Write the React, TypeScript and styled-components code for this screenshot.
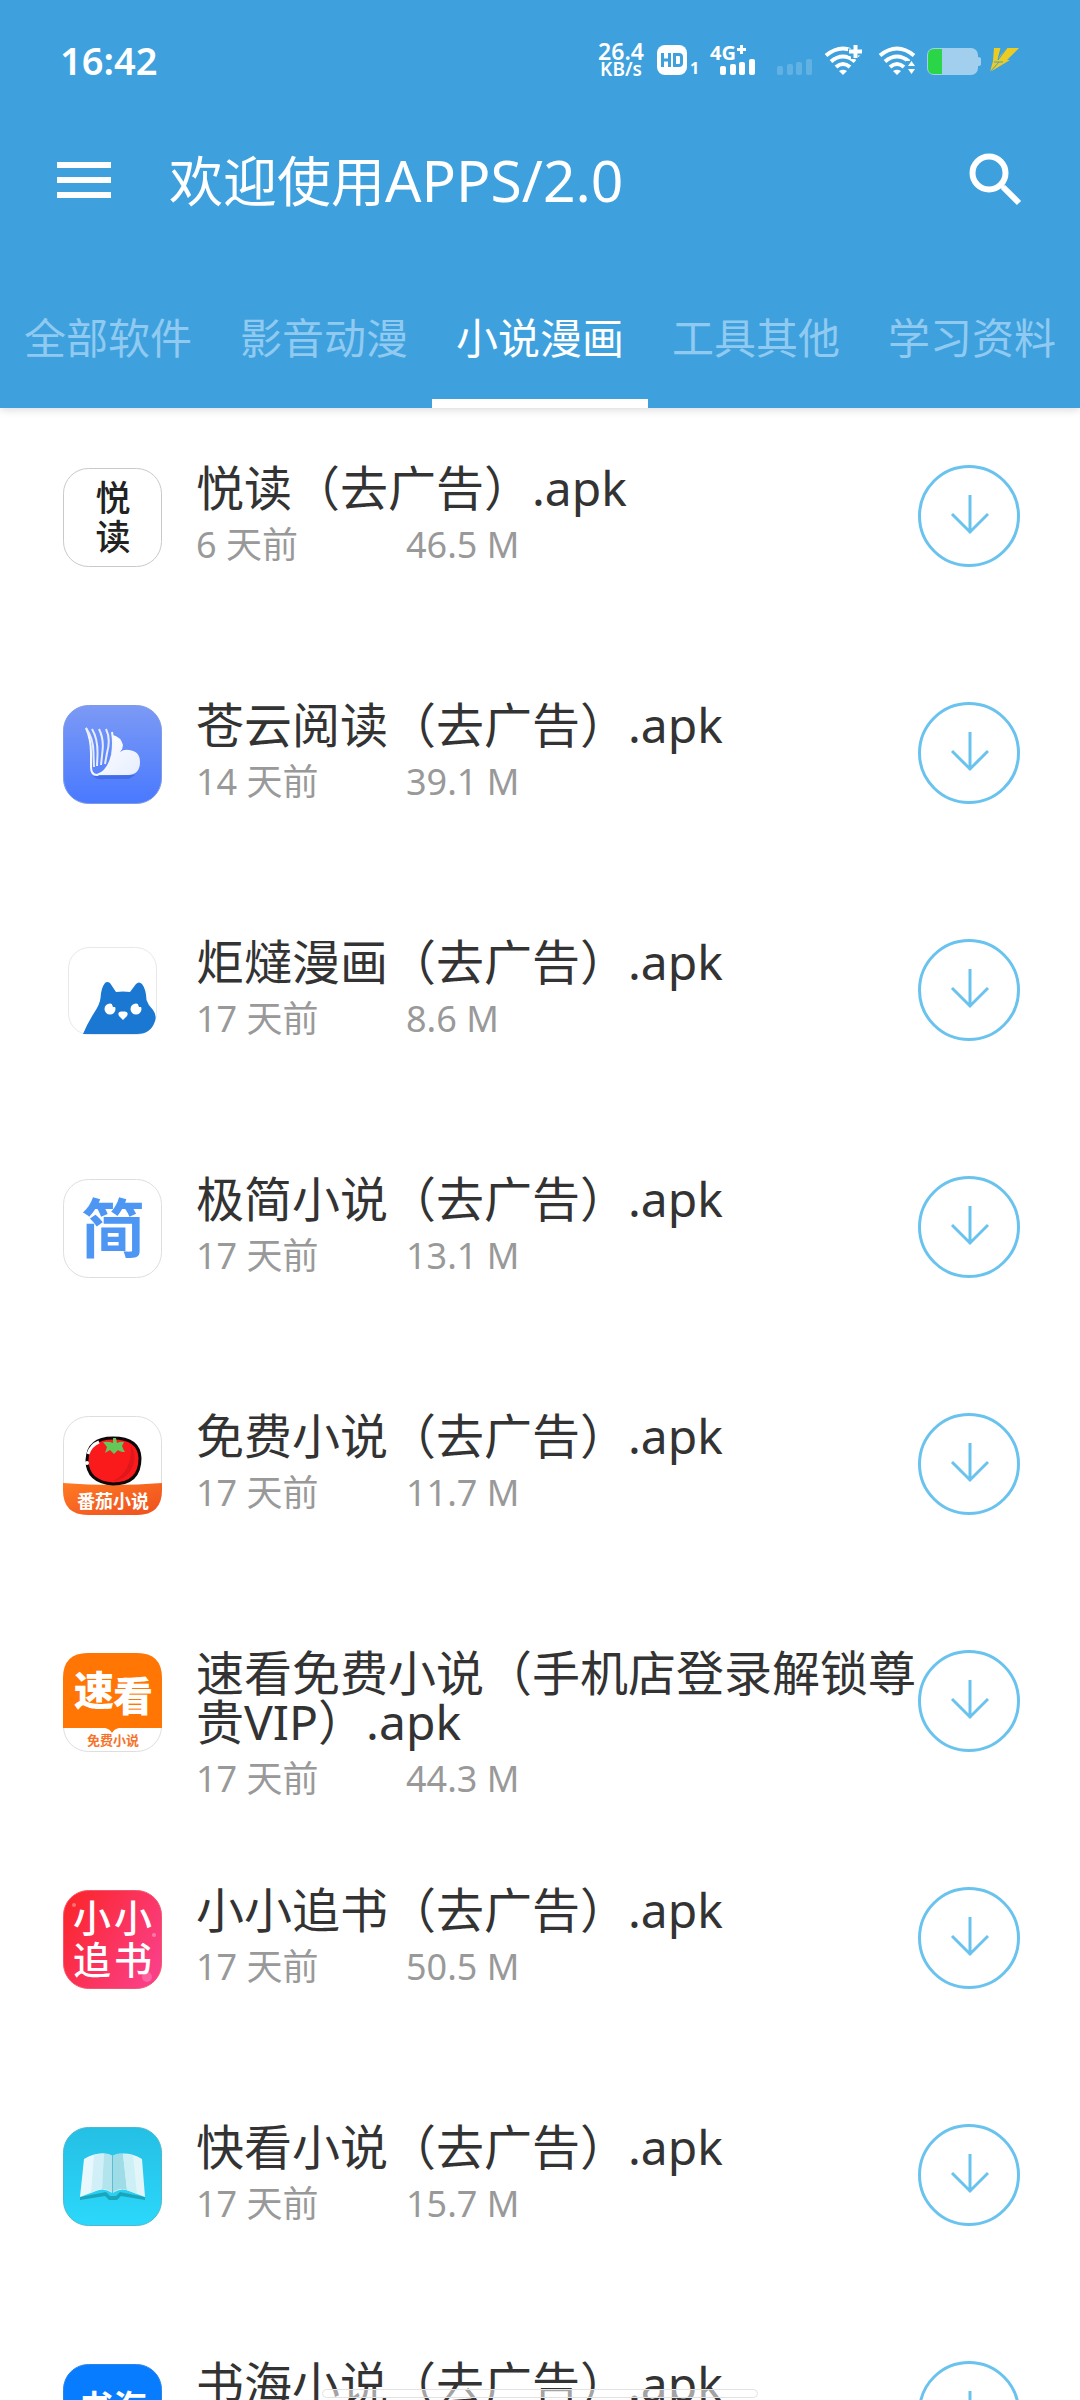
import React from 'react';
import styled, { createGlobalStyle } from 'styled-components';

const latin = '"Noto Sans", "Noto Sans CJK SC", sans-serif';
const cjk = '"Noto Sans CJK SC", sans-serif';

const GlobalStyle = createGlobalStyle`
  * { box-sizing: border-box; }
  body { margin: 0; background: #fff; font-family: ${latin}; }
  button { border: 0; padding: 0; background: none; font-family: inherit; color: inherit; cursor: pointer; }
`;

const Screen = styled.div`
  height: 100vh;
  display: flex;
  flex-direction: column;
  overflow: hidden;
`;

const Header = styled.header`
  position: relative;
  flex: none;
  background: #3ea1dd;
  color: #fff;
  box-shadow: 0 2px 8px rgba(0, 0, 0, 0.14);
`;

const StatusBar = styled.div`
  display: flex;
  align-items: center;
  height: 120px;
  padding: 0 58px 0 60px;
`;

const Clock = styled.time`
  flex: 1;
  font-size: 38px;
  font-weight: 600;
  line-height: 40px;
`;

const Speed = styled.div`
  display: flex;
  flex-direction: column;
  align-items: center;
  width: 48px;
  margin-right: 12px;
  font-weight: 600;
  line-height: 18px;
`;

const SpeedValue = styled.span`
  font-size: 23px;
`;

const SpeedUnit = styled.span`
  font-size: 19px;
`;

const StatusIcon = styled.svg`
  display: block;
  flex: none;
  height: 40px;
  overflow: visible;
`;

const Toolbar = styled.div`
  display: flex;
  align-items: center;
  height: 144px;
  padding: 0 56px 24px 57px;
`;

const IconButton = styled.button`
  display: flex;
  flex: none;
`;

const PageTitle = styled.h1`
  flex: 1;
  margin: 0 0 0 58px;
  font-size: 54px;
  font-weight: 400;
  line-height: 72px;
`;

const Version = styled.span`
  font-size: 57px;
`;

const Tabs = styled.div`
  display: flex;
`;

const Tab = styled.button<{ $active: boolean }>`
  flex: 1;
  height: 144px;
  padding-top: 3px;
  font-size: 42px;
  line-height: 60px;
  white-space: nowrap;
  color: ${(p) => (p.$active ? '#fff' : '#90caf1')};
  box-shadow: ${(p) => (p.$active ? 'inset 0 -9px #fff' : 'none')};
`;

const List = styled.ul`
  flex: 1;
  min-height: 0;
  overflow: hidden;
  margin: 0;
  padding: 0;
  list-style: none;
`;

const Row = styled.li`
  display: flex;
  align-items: flex-start;
  min-height: 237px;
  padding: 55px 60px 0 63px;
`;

const AppIcon = styled.svg`
  flex: none;
  width: 99px;
  height: 99px;
  margin-top: 5px;
  font-family: ${cjk};
  text-anchor: middle;
`;

const Info = styled.div`
  flex: 1;
  min-width: 0;
  padding-left: 34px;
`;

const FileName = styled.h2`
  margin: 0;
  font-size: 48px;
  font-weight: 400;
  line-height: 49px;
  color: #333;
`;

const Meta = styled.div`
  display: grid;
  grid-template-columns: 210px auto;
  margin-top: 9px;
  font-size: 36px;
  line-height: 48px;
  color: #999;
`;

const Download = styled.button`
  display: flex;
  flex: none;
  align-items: center;
  justify-content: center;
  width: 102px;
  height: 102px;
  margin-top: 2px;
  border: 3px solid #69c3ee;
  border-radius: 50%;
  color: #69c3ee;
`;

const HomeIndicator = styled.div`
  position: fixed;
  left: 50%;
  bottom: 2px;
  width: 436px;
  height: 9px;
  margin-left: -218px;
  border: 1px solid #e2e2e2;
  border-radius: 5px;
  background: rgba(255, 255, 255, 0.55);
`;

const Bars = ({ x }: { x: number }) => (
  <g fill="currentColor">
    <rect x={x} y="26" width="6" height="9" rx="2" />
    <rect x={x + 10} y="24" width="6" height="11" rx="2" />
    <rect x={x + 19} y="22" width="6" height="13" rx="2" />
    <rect x={x + 29} y="19" width="6" height="16" rx="2" />
  </g>
);

const WifiArcs = () => (
  <g fill="none" stroke="currentColor" strokeWidth="4">
    <path d="M3 15.500Q20 1.500 37 15.500" />
    <path d="M8 21.500Q20 11.500 32 21.500" />
    <path d="M13 27Q20 21 27 27" />
    <path d="M16 31Q20 28.500 24 31L20 35Z" fill="currentColor" stroke="none" />
  </g>
);

const StatusIcons = () => (
  <>
    <StatusIcon width="52" viewBox="0 0 52 40" aria-label="HD 1">
      <rect x="0" y="5" width="30" height="30" rx="8" fill="#fff" />
      <path
        d="M5.500 13V27M12.500 13V27M5.500 20H12.500M17.500 14.500H22Q24.500 14.500 24.500 17V23Q24.500 25.500 22 25.500H17.500Z"
        fill="none"
        stroke="#3ea1dd"
        strokeWidth="3"
      />
      <text x="33" y="34" fontSize="16" fontWeight="700" fill="#fff">1</text>
    </StatusIcon>
    <StatusIcon width="66" viewBox="0 0 66 40" aria-label="4G+">
      <text x="1" y="20" fontSize="20" fontWeight="700" fill="#fff">4G</text>
      <path d="M28 9.500H37M32.500 5V14" stroke="#fff" strokeWidth="3" />
      <Bars x={11} />
    </StatusIcon>
    <StatusIcon width="48" viewBox="0 0 48 40" opacity="0.18" aria-hidden="true">
      <Bars x={2} />
    </StatusIcon>
    <StatusIcon width="54" viewBox="0 0 54 40" aria-label="Wi-Fi">
      <WifiArcs />
      <path d="M25 12H38M31.500 5V19" stroke="#3ea1dd" strokeWidth="7" />
      <path d="M26 11.500H39M32.500 5V18" stroke="#fff" strokeWidth="4" />
    </StatusIcon>
    <StatusIcon width="48" viewBox="0 0 48 40" aria-label="Wi-Fi">
      <WifiArcs />
      <path d="M29 21H42V36H29Z" fill="#3ea1dd" />
      <path d="M31 26L34.500 21L38 26ZM31 29L34.500 34L38 29Z" fill="#fff" />
    </StatusIcon>
    <StatusIcon width="63" viewBox="0 0 63 40" aria-label="电量">
      <rect x="2" y="8" width="51" height="27" rx="7" fill="#a3cfee" />
      <path d="M53 17Q56 17 56 19V24Q56 26 53 26Z" fill="#a3cfee" />
      <path d="M17 9H9Q3 9 3 15V28Q3 34 9 34H17Z" fill="#2bd548" />
    </StatusIcon>
    <StatusIcon width="34" viewBox="0 0 34 40" aria-label="充电中">
      <path d="M6 8H13L10 18L19 8H31L19 20H22L2 32L5 21Z" fill="#eccb22" />
      <path d="M2 32L11 22H6M11 22H15M13 8L10 20L19 8" fill="none" stroke="#3ea1dd" strokeWidth="1" />
    </StatusIcon>
  </>
);

const Frame = ({ fill = '#fff', stroke = '#dedede' }: { fill?: string; stroke?: string }) => (
  <rect x="0.500" y="0.500" width="98" height="98" rx="25" fill={fill} stroke={stroke} />
);

const YueduIcon = () => (
  <AppIcon viewBox="0 0 99 99" aria-hidden="true">
    <Frame stroke="#c9c9c9" />
    <text x="50" y="43" fontSize="35" fontWeight="500" fill="#222">悦</text>
    <text x="50" y="82" fontSize="35" fontWeight="500" fill="#222">读</text>
  </AppIcon>
);

const CangyunIcon = () => (
  <AppIcon viewBox="0 0 99 99" aria-hidden="true">
    <defs>
      <linearGradient id="cy" x1="0" y1="0" x2="0" y2="1">
        <stop offset="0" stopColor="#7c9af5" />
        <stop offset="1" stopColor="#4979ff" />
      </linearGradient>
      <linearGradient id="cyCloud" x1="0" y1="0" x2="1" y2="1">
        <stop offset="0" stopColor="#fff" />
        <stop offset="1" stopColor="#e6edfe" />
      </linearGradient>
    </defs>
    <Frame fill="url(#cy)" stroke="#7f9be6" />
    <path d="M30 71Q34 75 42 74H66L72 70Z" fill="#345fd8" opacity="0.6" />
    <path
      d="M50 30Q58 32 60 40Q60 44 57 47Q61 44 66 45Q77 46 77 57Q77 69 66 70H34Q48 66 50 45Z"
      fill="url(#cyCloud)"
    />
    <path d="M23 23Q28 34 28 48V62Q28 70 34 70Q45 67 49 50Q51 38 49 27" fill="none" stroke="#f4f7ff" strokeWidth="2" />
    <path
      d="M23 23Q31 34 30.500 50L31 62M29 24Q35 34 34.500 50L34 61M36 24Q41 34 39.500 46L38 60M43 24Q48 34 44 48L42 59"
      fill="none"
      stroke="#e6edff"
      strokeWidth="2"
    />
  </AppIcon>
);

const JudaIcon = () => (
  <AppIcon viewBox="0 0 99 99" aria-hidden="true">
    <rect x="5.500" y="5.500" width="88" height="87" rx="21" fill="#fff" stroke="#e8e8e8" />
    <path
      d="M20 92Q24 82 31 71Q37 62 37.500 56Q38 46 42 41Q44 39 47 41L53 50Q60 49 67 50L73 42Q76 39 79 42Q83 47 83.500 58Q85 63 90 68Q94 73 92 79Q88 92 74 92Z"
      fill="#1a78d2"
    />
    <circle cx="47" cy="67" r="5.500" fill="#fff" />
    <circle cx="73" cy="67" r="5.500" fill="#fff" />
    <path d="M48 60H53V65H50ZM74 60H79V65H76Z" fill="#1a78d2" />
    <path d="M60 78L56 74Q54 70 58 69.500H62Q66 70 64 74Z" fill="#fff" />
  </AppIcon>
);

const JijianIcon = () => (
  <AppIcon viewBox="0 0 99 99" aria-hidden="true">
    <Frame />
    <text x="50" y="73" fontSize="64" fontWeight="700" fill="#4e96f3">简</text>
  </AppIcon>
);

const FanqieIcon = () => (
  <AppIcon viewBox="0 0 99 99" aria-hidden="true">
    <defs>
      <linearGradient id="fq" x1="0" y1="0" x2="1" y2="1">
        <stop offset="0" stopColor="#ff7a22" />
        <stop offset="1" stopColor="#ee4f20" />
      </linearGradient>
    </defs>
    <Frame />
    <path d="M0 67Q50 71 99 67V74Q99 99 74 99H25Q0 99 0 74Z" fill="url(#fq)" />
    <path
      d="M50 22Q76 22 77 42Q77 68 50 68Q24 66 24 44Q25 22 50 22Z"
      fill="#fa1a1c"
      stroke="#0c0808"
      strokeWidth="3"
    />
    <path d="M25 38Q28 29 36 26" fill="none" stroke="#fff" strokeWidth="3" />
    <circle cx="24" cy="47" r="2" fill="#fff" />
    <path d="M68 30Q76 42 66 57Q58 65 50 65Q69 56 68 30Z" fill="#c8141a" opacity="0.5" />
    <path
      d="M50 22L53 22L54 27Q58 25 61 26L59 30Q60 33 62 36Q57 36 55 34L51 38L47 34L42 37L44 31L40 26Q46 25 50 27Z"
      fill="#63c75a"
    />
    <text x="50" y="92" fontSize="18" fontWeight="700" fill="#fff">番茄小说</text>
  </AppIcon>
);

const SukanIcon = () => (
  <AppIcon viewBox="0 0 99 99" aria-hidden="true">
    <Frame />
    <path d="M0 75V25Q0 0 25 0H74Q99 0 99 25V75H56Q51 76 49 80Q47 76 42 75Z" fill="#ff7605" />
    <text x="31" y="52" fontSize="40" fontWeight="900" fill="#fff">速</text>
    <text x="70" y="58" fontSize="40" fontWeight="900" fill="#fff">看</text>
    <text x="50" y="92" fontSize="13" fontWeight="700" fill="#f5732b">免费小说</text>
  </AppIcon>
);

const XiaoxiaoIcon = () => (
  <AppIcon viewBox="0 0 99 99" aria-hidden="true">
    <defs>
      <linearGradient id="xx" x1="0" y1="0.100" x2="1" y2="0.700">
        <stop offset="0" stopColor="#fb2529" />
        <stop offset="1" stopColor="#fb3f86" />
      </linearGradient>
    </defs>
    <Frame fill="url(#xx)" stroke="#f4566c" />
    <circle cx="11" cy="15" r="2" fill="#ff7070" />
    <circle cx="91" cy="45" r="2" fill="#ff79a8" />
    <circle cx="84" cy="87" r="5" fill="#ff79b4" opacity="0.6" />
    <text x="29" y="42" fontSize="38" fontWeight="500" fill="#fff">小</text>
    <text x="70" y="42" fontSize="38" fontWeight="500" fill="#fff">小</text>
    <text x="29" y="84" fontSize="38" fontWeight="500" fill="#fff">追</text>
    <text x="70" y="84" fontSize="38" fontWeight="500" fill="#fff">书</text>
  </AppIcon>
);

const KuaikanIcon = () => (
  <AppIcon viewBox="0 0 99 99" aria-hidden="true">
    <defs>
      <linearGradient id="kk" x1="0" y1="0" x2="0" y2="1">
        <stop offset="0" stopColor="#25bfe4" />
        <stop offset="1" stopColor="#2bd8fb" />
      </linearGradient>
    </defs>
    <Frame fill="url(#kk)" stroke="#4fb8cf" />
    <path d="M17 70L43 65L47 69H53L57 65L82 70V73L58 69L54 73H46L42 69L17 73Z" fill="#1ba5bb" />
    <path d="M21 32Q33 25 45 27L49.500 29V66Q41 60 33 64L17 70Z" fill="#e9f8fc" />
    <path d="M79 32Q67 25 55 27L49.500 29V66Q58 60 66 64L82 70Z" fill="#e2f6fa" />
    <path d="M31 28Q36 26 41 26.500L39 62Q35 62 28 66Z" fill="#d0eff6" />
    <path d="M41 26.500L46 27L49.500 29V66Q45 62 39 62Z" fill="#b2e4ee" />
    <path d="M49.500 29L53 27Q57 26 60 27L64 63Q56 60 49.500 66Z" fill="#9edce7" />
    <path d="M60 27Q66 27 70 28.500L74 67L64 63Z" fill="#ccf0f5" />
    <path d="M49.500 29V66" stroke="#5dbccf" strokeWidth="1" />
  </AppIcon>
);

const ShuhaiIcon = () => (
  <AppIcon viewBox="0 0 99 99" aria-hidden="true">
    <Frame fill="#087cff" stroke="#2b84ea" />
    <text x="50" y="56" fontSize="34" fontWeight="700" fill="#fff">书海</text>
  </AppIcon>
);

const apps = [
  { name: '悦读（去广告）.apk', age: '6 天前', size: '46.5 M', Icon: YueduIcon },
  { name: '苍云阅读（去广告）.apk', age: '14 天前', size: '39.1 M', Icon: CangyunIcon },
  { name: '炬燵漫画（去广告）.apk', age: '17 天前', size: '8.6 M', Icon: JudaIcon },
  { name: '极简小说（去广告）.apk', age: '17 天前', size: '13.1 M', Icon: JijianIcon },
  { name: '免费小说（去广告）.apk', age: '17 天前', size: '11.7 M', Icon: FanqieIcon },
  { name: '速看免费小说（手机店登录解锁尊贵VIP）.apk', age: '17 天前', size: '44.3 M', Icon: SukanIcon },
  { name: '小小追书（去广告）.apk', age: '17 天前', size: '50.5 M', Icon: XiaoxiaoIcon },
  { name: '快看小说（去广告）.apk', age: '17 天前', size: '15.7 M', Icon: KuaikanIcon },
  { name: '书海小说（去广告）.apk', Icon: ShuhaiIcon },
];

const tabs = ['全部软件', '影音动漫', '小说漫画', '工具其他', '学习资料'];

export default function App() {
  const [active, setActive] = React.useState(2);
  return (
    <Screen lang="zh-CN">
      <GlobalStyle />
      <Header>
        <StatusBar>
          <Clock>16:42</Clock>
          <Speed>
            <SpeedValue>26.4</SpeedValue>
            <SpeedUnit>KB/s</SpeedUnit>
          </Speed>
          <StatusIcons />
        </StatusBar>
        <Toolbar>
          <IconButton aria-label="菜单">
            <svg width="54" height="36" viewBox="0 0 54 36" fill="#fff">
              <path d="M0 0H54V6H0ZM0 15H54V21H0ZM0 30H54V36H0Z" />
            </svg>
          </IconButton>
          <PageTitle>
            欢迎使用<Version>APPS/2.0</Version>
          </PageTitle>
          <IconButton aria-label="搜索">
            <svg width="56" height="56" viewBox="0 0 56 56" fill="none" stroke="#fff" strokeWidth="6">
              <circle cx="21" cy="21" r="16.500" />
              <path d="M32 32L36 36" strokeWidth="4" />
              <path d="M35 35L51 51" />
            </svg>
          </IconButton>
        </Toolbar>
        <Tabs role="tablist">
          {tabs.map((label, i) => (
            <Tab key={label} role="tab" aria-selected={i === active} $active={i === active} onClick={() => setActive(i)}>
              {label}
            </Tab>
          ))}
        </Tabs>
      </Header>
      <List>
        {apps.map(({ name, age, size, Icon }) => (
          <Row key={name}>
            <Icon />
            <Info>
              <FileName>{name}</FileName>
              {age && (
                <Meta>
                  <span>{age}</span>
                  <span>{size}</span>
                </Meta>
              )}
            </Info>
            <Download aria-label={`下载 ${name}`}>
              <svg width="40" height="42" viewBox="0 0 40 42" fill="none" stroke="currentColor" strokeWidth="3">
                <path d="M21 0V38M3 19L21 37L39 19" />
              </svg>
            </Download>
          </Row>
        ))}
      </List>
      <HomeIndicator />
    </Screen>
  );
}
